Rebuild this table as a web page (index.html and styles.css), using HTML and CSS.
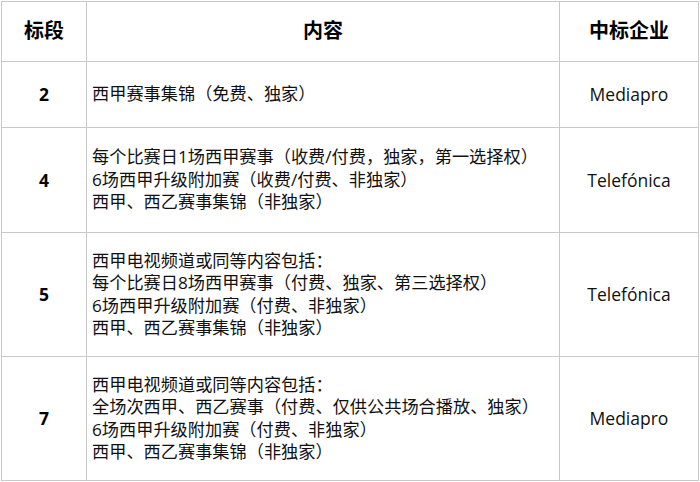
FILE: index.html
```html
<!DOCTYPE html>
<html lang="zh-CN">
<head>
<meta charset="utf-8">
<link rel="stylesheet" href="styles.css">
</head>
<body>
<table class="bids">
  <colgroup>
    <col class="c-seg">
    <col class="c-content">
    <col class="c-winner">
  </colgroup>
  <thead>
    <tr class="r-head">
      <th>标段</th>
      <th>内容</th>
      <th>中标企业</th>
    </tr>
  </thead>
  <tbody>
    <tr class="r-1">
      <td class="seg">2</td>
      <td class="content">西甲赛事集锦（免费、独家）</td>
      <td class="winner">Mediapro</td>
    </tr>
    <tr class="r-2">
      <td class="seg">4</td>
      <td class="content">每个比赛日1场西甲赛事（收费/付费，独家，第一选择权）<br>6场西甲升级附加赛（收费/付费、非独家）<br>西甲、西乙赛事集锦（非独家）</td>
      <td class="winner">Telefónica</td>
    </tr>
    <tr class="r-3">
      <td class="seg">5</td>
      <td class="content">西甲电视频道或同等内容包括：<br>每个比赛日8场西甲赛事（付费、独家、第三选择权）<br>6场西甲升级附加赛（付费、非独家）<br>西甲、西乙赛事集锦（非独家）</td>
      <td class="winner">Telefónica</td>
    </tr>
    <tr class="r-4">
      <td class="seg">7</td>
      <td class="content">西甲电视频道或同等内容包括：<br>全场次西甲、西乙赛事（付费、仅供公共场合播放、独家）<br>6场西甲升级附加赛（付费、非独家）<br>西甲、西乙赛事集锦（非独家）</td>
      <td class="winner">Mediapro</td>
    </tr>
  </tbody>
</table>
</body>
</html>
```

FILE: styles.css
```css
html, body {
  margin: 0;
  padding: 0;
  background: #ffffff;
}

body {
  padding: 1px 0 0 1px;
  font-family: "Open Sans", "Noto Sans CJK SC", sans-serif;
  font-size: 17.2px;
  color: #111111;
}

.bids {
  border-collapse: collapse;
  table-layout: fixed;
  width: 697px;
}

.c-seg { width: 85px; }
.c-content { width: 473px; }
.c-winner { width: 139px; }

.bids th,
.bids td {
  border: 1.5px solid #c9c9c9;
  padding: 0 5px;
  line-height: 22.5px;
  vertical-align: middle;
}

.bids th {
  font-size: 20px;
  font-weight: 700;
  color: #000000;
  text-align: center;
}

.r-head { height: 60px; }
.r-1 { height: 66px; }
.r-2 { height: 105px; }
.r-3 { height: 124px; }
.r-4 { height: 124px; }

.seg {
  text-align: center;
  font-weight: 700;
  font-size: 17.5px;
  color: #000000;
}

.content {
  text-align: left;
  white-space: nowrap;
}

.winner {
  text-align: center;
  font-size: 17.5px;
}
```
